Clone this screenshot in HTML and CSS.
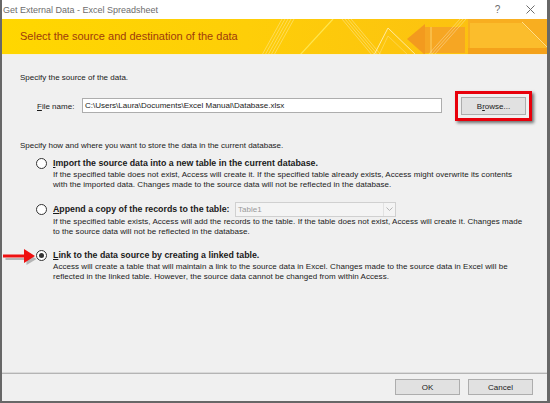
FILE: index.html
```html
<!DOCTYPE html>
<html>
<head>
<meta charset="utf-8">
<link rel="stylesheet" href="styles.css">
</head>
<body>
<div class="window">
  <div class="titlebar">
    <span class="title">Get External Data - Excel Spreadsheet</span>
    <span class="tb-btn">?</span>
    <span class="tb-btn"><svg width="9" height="9" viewBox="0 0 9 9"><path d="M0.5 0.5L8.5 8.5M8.5 0.5L0.5 8.5" stroke="#6d6d6d" stroke-width="1"/></svg></span>
  </div>
  <div class="banner">
    <svg class="banner-art" width="545" height="36" viewBox="2 19 545 36" preserveAspectRatio="none">
      <defs>
        <linearGradient id="bg" x1="0" x2="1" y1="0" y2="0">
          <stop offset="0" stop-color="#ffd700"/>
          <stop offset="0.45" stop-color="#fece08"/>
          <stop offset="1" stop-color="#fbbd14"/>
        </linearGradient>
      </defs>
      <rect x="2" y="19" width="545" height="36" fill="url(#bg)"/>
      <g stroke="#fff" stroke-opacity="0.45" stroke-width="0.7">
        <line x1="262" y1="55" x2="282" y2="19"/>
        <line x1="265" y1="55" x2="285" y2="19"/>
        <line x1="268" y1="55" x2="288" y2="19"/>
        <line x1="271" y1="55" x2="291" y2="19"/>
        <line x1="274" y1="55" x2="294" y2="19"/>
      </g>
      <line x1="300" y1="55" x2="333" y2="19" stroke="#ffe650" stroke-width="1.2"/>
      <g stroke="#fff" stroke-opacity="0.45" stroke-width="0.7">
        <line x1="342" y1="19" x2="372" y2="55"/>
        <line x1="345" y1="19" x2="375" y2="55"/>
        <line x1="348" y1="19" x2="378" y2="55"/>
        <line x1="351" y1="19" x2="381" y2="55"/>
      </g>
      <polyline points="374,55 388,28 416,55" fill="none" stroke="#ffe9a0" stroke-width="1"/>
      <polyline points="379,55 388,36 408,55" fill="none" stroke="#ffe9a0" stroke-opacity="0.6" stroke-width="0.7"/>
      <polygon points="407,39 425,24 425,55" fill="#f39a1e"/>
      <rect x="425" y="27" width="40" height="26" fill="#f6a623"/>
      <line x1="431" y1="27" x2="431" y2="55" stroke="#fcd36b" stroke-width="1"/>
      <g stroke="#fff" stroke-opacity="0.45" stroke-width="0.7">
        <line x1="428" y1="55" x2="460" y2="19"/>
        <line x1="431" y1="55" x2="463" y2="19"/>
        <line x1="434" y1="55" x2="466" y2="19"/>
      </g>
      <rect x="468" y="19" width="79" height="36" fill="#f8ae20"/>
      <polygon points="470,23 522,23 547,48 470,48" fill="#fbbd2c"/>
      <line x1="522" y1="22" x2="547" y2="47" stroke="#fde08a" stroke-width="1"/>
      <rect x="468" y="48" width="79" height="7" fill="#f4a21b"/>
    </svg>
    <h1 class="banner-title">Select the source and destination of the data</h1>
  </div>
  <div class="content">
    <p class="section">Specify the source of the data.</p>
    <div class="file-row">
      <span class="file-label"><u>F</u>ile name:</span>
      <div class="text-input">C:\Users\Laura\Documents\Excel Manual\Database.xlsx</div>
      <div class="highlight"><button class="btn">B<u>r</u>owse...</button></div>
    </div>
    <p class="section section-2">Specify how and where you want to store the data in the current database.</p>
    <div class="options">
      <div class="option">
        <div class="opt-head"><span class="radio"></span><span class="opt-label"><u>I</u>mport the source data into a new table in the current database.</span></div>
        <p class="desc">If the specified table does not exist, Access will create it. If the specified table already exists, Access might overwrite its contents<br>with the imported data. Changes made to the source data will not be reflected in the database.</p>
      </div>
      <div class="option option-2">
        <div class="opt-head"><span class="radio"></span><span class="opt-label opt-label-wide"><u>A</u>ppend a copy of the records to the table:</span>
          <div class="combo"><span class="combo-text">Table1</span><span class="combo-btn"><svg width="7" height="4" viewBox="0 0 7 4"><path d="M0.5 0.5L3.5 3.5L6.5 0.5" fill="none" stroke="#b5b5b5" stroke-width="1"/></svg></span></div>
        </div>
        <p class="desc">If the specified table exists, Access will add the records to the table. If the table does not exist, Access will create it. Changes made<br>to the source data will not be reflected in the database.</p>
      </div>
      <div class="option">
        <div class="opt-head"><span class="radio radio-on"></span><span class="opt-label"><u>L</u>ink to the data source by creating a linked table.</span></div>
        <p class="desc">Access will create a table that will maintain a link to the source data in Excel. Changes made to the source data in Excel will be<br>reflected in the linked table. However, the source data cannot be changed from within Access.</p>
      </div>
    </div>
  </div>
  <div class="footer">
    <button class="btn btn-foot">OK</button>
    <button class="btn btn-foot">Cancel</button>
  </div>
  <svg class="red-arrow" width="36" height="18" viewBox="0 0 36 18">
    <path d="M2 9.5h21v-5l10 6-10 6v-5H2z" fill="#7a7a7a" opacity="0.5" transform="translate(1.5,1.5)"/>
    <path d="M1 7.5h21v-5.5l11 7-11 7v-5.5H1z" fill="#ee1111"/>
  </svg>
</div>
</body>
</html>
```
FILE: styles.css
```css
* { box-sizing: border-box; }
html, body { margin: 0; padding: 0; }
body {
  background: #676767;
  font-family: "Liberation Sans", Arial, sans-serif;
  font-size: 8px;
  color: #1a1a1a;
  height: 403px;
  overflow: hidden;
}
.window {
  position: relative;
  margin: 0 3px 0 2px;
  height: 401px;
  background: #f0f0f0;
  display: flex;
  flex-direction: column;
}
.titlebar {
  height: 19px;
  background: #fff;
  display: flex;
  align-items: center;
  padding-left: 1px;
  color: #6d6d6d;
  font-size: 9px;
}
.title { flex: 1; }
.tb-btn {
  width: 33px;
  display: flex;
  justify-content: center;
  align-items: center;
  font-size: 10px;
}
.banner {
  position: relative;
  height: 36px;
  overflow: hidden;
  border-bottom: 1px solid #f6f0dc;
}
.banner-art { position: absolute; left: 0; top: 0; }
.banner-title {
  position: relative;
  margin: 0;
  padding-left: 18px;
  line-height: 35px;
  font-size: 11px;
  font-weight: normal;
  color: #9e3b0c;
}
.content {
  flex: 1;
  padding: 18px 0 0 18px;
}
.section { margin: 0; line-height: 10px; }
.section-2 { margin-top: 20px; }
.file-row {
  display: flex;
  align-items: center;
  margin: 8px 0 0 17px;
}
.file-label { width: 45px; }
.text-input {
  width: 360px;
  height: 15px;
  border: 1px solid #adadad;
  background: #fff;
  padding-left: 2px;
  line-height: 13px;
  margin-top: -1px;
}
.highlight {
  margin-left: 13px;
  border: 3px solid #e8000b;
  padding: 3px;
  box-shadow: 2px 2px 3px rgba(0, 0, 0, 0.55);
}
.btn {
  display: block;
  width: 65px;
  height: 18px;
  border: 1px solid #adadad;
  background: #e1e1e1;
  font-family: inherit;
  font-size: 8px;
  color: #1a1a1a;
  padding: 0;
}
.options { margin: 5px 0 0 16px; }
.option + .option { margin-top: 11px; }
.opt-head {
  display: flex;
  align-items: center;
  height: 14px;
}
.option-2 .opt-head { height: 16px; }
.radio {
  width: 11px;
  height: 11px;
  border-radius: 50%;
  border: 1px solid #333;
  background: #fff;
  margin-right: 6px;
  display: flex;
  align-items: center;
  justify-content: center;
}
.radio-on::after {
  content: "";
  width: 5px;
  height: 5px;
  border-radius: 50%;
  background: #333;
}
.opt-label { font-weight: bold; font-size: 8.8px; }
.opt-label-wide { width: 182px; }
.desc { margin: 0 0 0 17px; line-height: 10px; letter-spacing: 0.05px; }
.combo {
  width: 161px;
  height: 15px;
  border: 1px solid #d0d0d0;
  background: #f4f4f4;
  display: flex;
  align-items: center;
}
.combo-text { flex: 1; padding-left: 2px; color: #9a9a9a; }
.combo-btn {
  width: 12px;
  height: 13px;
  border-left: 1px solid #e2e2e2;
  display: flex;
  align-items: center;
  justify-content: center;
}
.footer {
  height: 29px;
  border-top: 1px solid #dadada;
  box-shadow: inset 0 1px 0 #b4b4b4;
  display: flex;
  justify-content: flex-end;
  gap: 8px;
  padding: 6px 14px 0 0;
}
.btn-foot { height: 16px; }
.red-arrow {
  position: absolute;
  left: 0;
  top: 247px;
}
```
